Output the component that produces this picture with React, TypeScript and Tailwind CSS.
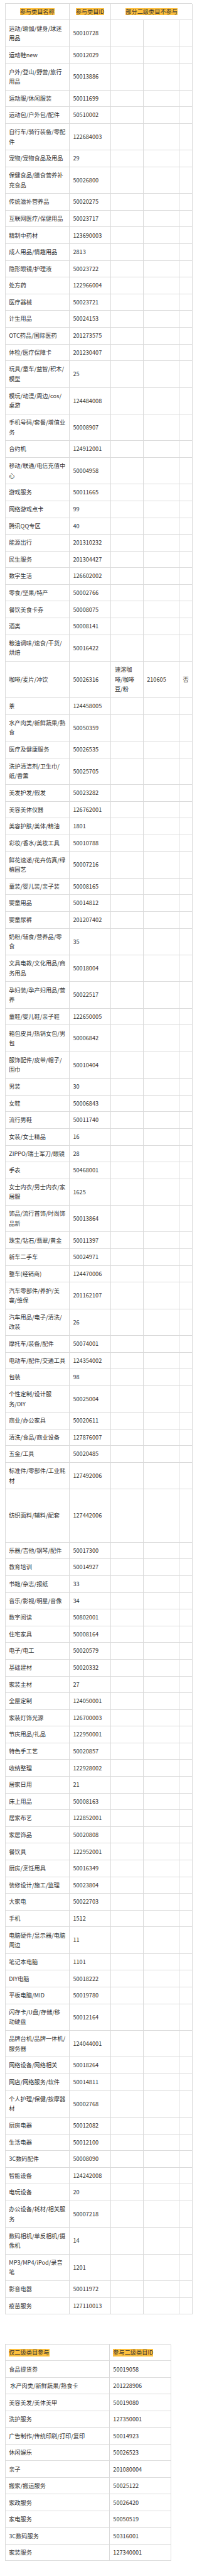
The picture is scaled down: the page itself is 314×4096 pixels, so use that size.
import React from "react";

interface Row {
  name: string[];
  id: string;
  sub?: string[];
  subId?: string;
  flag?: string;
  tall?: boolean;
}

const ROWS: Row[] = [
  { name: ["运动/瑜伽/健身/球迷", "用品"], id: "50010728" },
  { name: ["运动鞋new"], id: "50012029" },
  { name: ["户外/登山/野营/旅行", "用品"], id: "50013886" },
  { name: ["运动服/休闲服装"], id: "50011699" },
  { name: ["运动包/户外包/配件"], id: "50510002" },
  { name: ["自行车/骑行装备/零配", "件"], id: "122684003" },
  { name: ["宠物/宠物食品及用品"], id: "29" },
  { name: ["保健食品/膳食营养补", "充食品"], id: "50026800" },
  { name: ["传统滋补营养品"], id: "50020275" },
  { name: ["互联网医疗/保健用品"], id: "50023717" },
  { name: ["精制中药材"], id: "123690003" },
  { name: ["成人用品/情趣用品"], id: "2813" },
  { name: ["隐形眼镜/护理液"], id: "50023722" },
  { name: ["处方药"], id: "122966004" },
  { name: ["医疗器械"], id: "50023721" },
  { name: ["计生用品"], id: "50024153" },
  { name: ["OTC药品/国际医药"], id: "201273575" },
  { name: ["体检/医疗保障卡"], id: "201230407" },
  { name: ["玩具/童车/益智/积木/", "模型"], id: "25" },
  { name: ["模玩/动漫/周边/cos/", "桌游"], id: "124484008" },
  { name: ["手机号码/套餐/增值业", "务"], id: "50008907" },
  { name: ["合约机"], id: "124912001" },
  { name: ["移动/联通/电信充值中", "心"], id: "50004958" },
  { name: ["游戏服务"], id: "50011665" },
  { name: ["网络游戏点卡"], id: "99" },
  { name: ["腾讯QQ专区"], id: "40" },
  { name: ["能源出行"], id: "201310232" },
  { name: ["民生服务"], id: "201304427" },
  { name: ["数字生活"], id: "126602002" },
  { name: ["零食/坚果/特产"], id: "50002766" },
  { name: ["餐饮美食卡券"], id: "50008075" },
  { name: ["酒类"], id: "50008141" },
  { name: ["粮油调味/速食/干货/", "烘焙"], id: "50016422" },
  {
    name: ["咖啡/麦片/冲饮"],
    id: "50026316",
    sub: ["速溶咖", "啡/咖啡", "豆/粉"],
    subId: "210605",
    flag: "否",
  },
  { name: ["茶"], id: "124458005" },
  { name: ["水产肉类/新鲜蔬果/熟", "食"], id: "50050359" },
  { name: ["医疗及健康服务"], id: "50026535" },
  { name: ["洗护清洁剂/卫生巾/", "纸/香薰"], id: "50025705" },
  { name: ["美发护发/假发"], id: "50023282" },
  { name: ["美容美体仪器"], id: "126762001" },
  { name: ["美容护肤/美体/精油"], id: "1801" },
  { name: ["彩妆/香水/美妆工具"], id: "50010788" },
  { name: ["鲜花速递/花卉仿真/绿", "植园艺"], id: "50007216" },
  { name: ["童装/婴儿装/亲子装"], id: "50008165" },
  { name: ["婴童用品"], id: "50014812" },
  { name: ["婴童尿裤"], id: "201207402" },
  { name: ["奶粉/辅食/营养品/零", "食"], id: "35" },
  { name: ["文具电教/文化用品/商", "务用品"], id: "50018004" },
  { name: ["孕妇装/孕产妇用品/营", "养"], id: "50022517" },
  { name: ["童鞋/婴儿鞋/亲子鞋"], id: "122650005" },
  { name: ["箱包皮具/热销女包/男", "包"], id: "50006842" },
  { name: ["服饰配件/皮带/帽子/", "围巾"], id: "50010404" },
  { name: ["男装"], id: "30" },
  { name: ["女鞋"], id: "50006843" },
  { name: ["流行男鞋"], id: "50011740" },
  { name: ["女装/女士精品"], id: "16" },
  { name: ["ZIPPO/瑞士军刀/眼镜"], id: "28" },
  { name: ["手表"], id: "50468001" },
  { name: ["女士内衣/男士内衣/家", "居服"], id: "1625" },
  { name: ["饰品/流行首饰/时尚饰", "品新"], id: "50013864" },
  { name: ["珠宝/钻石/翡翠/黄金"], id: "50011397" },
  { name: ["新车二手车"], id: "50024971" },
  { name: ["整车(经销商)"], id: "124470006" },
  { name: ["汽车零部件/养护/美", "容/维保"], id: "201162107" },
  { name: ["汽车用品/电子/清洗/", "改装"], id: "26" },
  { name: ["摩托车/装备/配件"], id: "50074001" },
  { name: ["电动车/配件/交通工具"], id: "124354002" },
  { name: ["包装"], id: "98" },
  { name: ["个性定制/设计服", "务/DIY"], id: "50025004" },
  { name: ["商业/办公家具"], id: "50020611" },
  { name: ["清洗/食品/商业设备"], id: "127876007" },
  { name: ["五金/工具"], id: "50020485" },
  { name: ["标准件/零部件/工业耗", "材"], id: "127492006" },
  { name: ["纺织面料/辅料/配套"], id: "127442006", tall: true },
  { name: ["乐器/吉他/钢琴/配件"], id: "50017300" },
  { name: ["教育培训"], id: "50014927" },
  { name: ["书籍/杂志/报纸"], id: "33" },
  { name: ["音乐/影视/明星/音像"], id: "34" },
  { name: ["数字阅读"], id: "50802001" },
  { name: ["住宅家具"], id: "50008164" },
  { name: ["电子/电工"], id: "50020579" },
  { name: ["基础建材"], id: "50020332" },
  { name: ["家装主材"], id: "27" },
  { name: ["全屋定制"], id: "124050001" },
  { name: ["家装灯饰光源"], id: "126700003" },
  { name: ["节庆用品/礼品"], id: "122950001" },
  { name: ["特色手工艺"], id: "50020857" },
  { name: ["收纳整理"], id: "122928002" },
  { name: ["居家日用"], id: "21" },
  { name: ["床上用品"], id: "50008163" },
  { name: ["居家布艺"], id: "122852001" },
  { name: ["家居饰品"], id: "50020808" },
  { name: ["餐饮具"], id: "122952001" },
  { name: ["厨房/烹饪用具"], id: "50016349" },
  { name: ["装修设计/施工/监理"], id: "50023804" },
  { name: ["大家电"], id: "50022703" },
  { name: ["手机"], id: "1512" },
  { name: ["电脑硬件/显示器/电脑", "周边"], id: "11" },
  { name: ["笔记本电脑"], id: "1101" },
  { name: ["DIY电脑"], id: "50018222" },
  { name: ["平板电脑/MID"], id: "50019780" },
  { name: ["闪存卡/U盘/存储/移", "动硬盘"], id: "50012164" },
  { name: ["品牌台机/品牌一体机/", "服务器"], id: "124044001" },
  { name: ["网络设备/网络相关"], id: "50018264" },
  { name: ["网店/网络服务/软件"], id: "50014811" },
  { name: ["个人护理/保健/按摩器", "材"], id: "50002768" },
  { name: ["厨房电器"], id: "50012082" },
  { name: ["生活电器"], id: "50012100" },
  { name: ["3C数码配件"], id: "50008090" },
  { name: ["智能设备"], id: "124242008" },
  { name: ["电玩设备"], id: "20" },
  { name: ["办公设备/耗材/相关服", "务"], id: "50007218" },
  { name: ["数码相机/单反相机/摄", "像机"], id: "14" },
  { name: ["MP3/MP4/iPod/录音", "笔"], id: "1201" },
  { name: ["影音电器"], id: "50011972" },
  { name: ["疫苗服务"], id: "127110013" },
];

const SECOND_LEVEL = [
  { name: "食品提货券", id: "50019058" },
  { name: " 水产肉类/新鲜蔬果/熟食卡", id: "201228906" },
  { name: "美容美发/美体美甲", id: "50019080" },
  { name: "洗护服务", id: "127350001" },
  { name: "广告制作/传统印刷/打印/复印", id: "50014923" },
  { name: "休闲娱乐", id: "50026523" },
  { name: "亲子", id: "201080004" },
  { name: "搬家/搬运服务", id: "50025122" },
  { name: "家政服务", id: "50026420" },
  { name: "家电服务", id: "50050519" },
  { name: "3C数码服务", id: "50316001" },
  { name: "家装服务", id: "127340001" },
];

const HEIGHTS: Record<number, string> = {
  1: "h-[26.6px]",
  2: "h-[42.4px]",
  3: "h-[58px]",
};

const cell = "border-r border-b border-[#dadada] flex items-center px-[5.6px]";

function Lines({ lines }: { lines: string[] }) {
  return (
    <div className="whitespace-pre">
      {lines.map((l, i) => (
        <div key={i}>{l}</div>
      ))}
    </div>
  );
}

function Mark({ children }: { children: React.ReactNode }) {
  return (
    <span className="inline-block bg-[#fec03e] leading-[11.7px] whitespace-nowrap">
      {children}
    </span>
  );
}

function CategoryRow({ row }: { row: Row }) {
  const lines = Math.max(row.name.length, row.sub ? row.sub.length : 1);
  const h = row.tall ? "h-[84.4px]" : HEIGHTS[lines];

  return (
    <>
      <div className={`${h} ${cell}`}>
        <Lines lines={row.name} />
      </div>
      <div className={`${h} ${cell}`}>{row.id}</div>
      <div className={`${h} ${cell}`}>{row.sub && <Lines lines={row.sub} />}</div>
      <div className={`${h} ${cell}`}>{row.subId}</div>
      <div className={`${h} ${cell}`}>{row.flag}</div>
    </>
  );
}

export default function App() {
  return (
    <div className="bg-white w-[314px] pt-[4.8px] pb-[22px] pl-[7.6px] text-[9.2px] leading-[15.4px] text-[#333] [font-family:'Noto_Sans_CJK_SC',sans-serif]">
      <div className="w-[298.4px] grid grid-cols-[102.2px_66.5px_51.3px_57.3px_21.1px] border-l border-t border-[#dadada]">
        <div className={`h-[26.5px] ${cell} justify-center`}>
          <Mark>参与类目名称</Mark>
        </div>
        <div className={`h-[26.5px] ${cell} justify-center`}>
          <Mark>参与类目ID</Mark>
        </div>
        <div className={`h-[26.5px] ${cell} justify-center col-span-3`}>
          <Mark>部分二级类目不参与</Mark>
        </div>
        {ROWS.map((r) => (
          <CategoryRow key={r.id + r.name[0]} row={r} />
        ))}
      </div>

      <div className="mt-[46.7px] w-[264.8px] grid grid-cols-[166.1px_98.7px] border-l border-t border-[#dadada]">
        <div className={`h-[26.5px] ${cell}`}>
          <Mark>仅二级类目参与</Mark>
        </div>
        <div className={`h-[26.5px] ${cell}`}>
          <Mark>参与二级类目ID</Mark>
        </div>
        {SECOND_LEVEL.map((r) => (
          <React.Fragment key={r.id}>
            <div className={`h-[26.5px] ${cell} whitespace-pre`}>{r.name}</div>
            <div className={`h-[26.5px] ${cell}`}>{r.id}</div>
          </React.Fragment>
        ))}
      </div>
    </div>
  );
}
